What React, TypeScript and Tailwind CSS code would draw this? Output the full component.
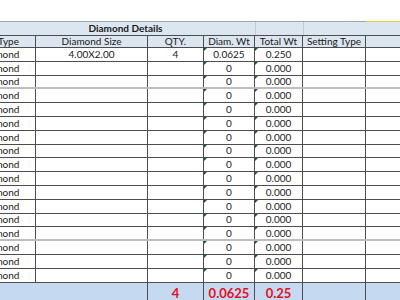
const cols = {
  type: "w-[72px]",
  size: "w-[112px]",
  qty: "w-[56px]",
  dwt: "w-[51px]",
  twt: "w-[48px]",
  set: "w-[63px]",
  last: "w-[130px]",
};

const cell = "shrink-0 flex items-center justify-center border-r border-[#4d4d4d] whitespace-nowrap";

type Row = { size: string; qty: string; dwt: string; twt: string };

const rows: Row[] = [
  { size: "4.00X2.00", qty: "4", dwt: "0.0625", twt: "0.250" },
  ...Array.from({ length: 16 }, () => ({ size: "", qty: "", dwt: "0", twt: "0.000" })),
];

// rows whose bottom line shows lighter and thicker in the sheet
const softLines = [2, 13];

function Mark() {
  return (
    <span className="absolute left-0 top-0 h-0 w-0 border-l-[3px] border-b-[3px] border-l-[#1e5a2a] border-b-transparent" />
  );
}

export default function App() {
  return (
    <div
      className="relative h-[300px] w-[400px] overflow-hidden bg-white text-[10px] text-[#1a1a1a]"
      style={{ fontFamily: "Lato, 'Liberation Sans', sans-serif" }}
    >
      <div className="ml-[-36px] w-[532px] pt-[21px]">
        {/* title row */}
        <div className="flex h-[14px] border-t border-[#9ea7b1] bg-[#dce6f1]">
          <div className="flex w-[291px] shrink-0 items-center justify-center pl-[32px] font-bold">
            Diamond Details
          </div>
          <div className={`${cols.twt} shrink-0 border-l border-[#c3ccd6]`} />
          <div className={`${cols.set} shrink-0 border-l border-[#c3ccd6]`} />
          <div className={`${cols.last} relative shrink-0`}>
            <span className="absolute left-0 right-0 top-[-1px] h-[1px] bg-[#e2d23a]" />
          </div>
        </div>

        {/* header row */}
        <div className="flex h-[13px] border-y border-[#4d4d4d] bg-[#dce6f1]">
          <div className={`${cols.type} shrink-0 flex items-center justify-end whitespace-nowrap border-r border-[#4d4d4d] pr-[16px]`}>
            Stone Type
          </div>
          <div className={`${cell} ${cols.size}`}>Diamond Size</div>
          <div className={`${cell} ${cols.qty}`}>QTY.</div>
          <div className={`${cell} ${cols.dwt}`}>Diam. Wt</div>
          <div className={`${cell} ${cols.twt}`}>Total Wt</div>
          <div className={`${cell} ${cols.set}`}>Setting Type</div>
          <div className={`${cell} ${cols.last}`}>Certificate No</div>
        </div>

        {/* data rows */}
        {rows.map((r, i) => (
          <div
            key={i}
            className={
              softLines.includes(i)
                ? "flex h-[13.8px] border-b-2 border-[#bdbdbd]"
                : "flex h-[13.8px] border-b border-[#4d4d4d]"
            }
          >
            <div className={`${cell} ${cols.type}`}>Diamond</div>
            <div className={`${cell} ${cols.size}`}>{r.size}</div>
            <div className={`${cell} ${cols.qty}`}>{r.qty}</div>
            <div className={`${cell} ${cols.dwt} relative`}>
              <Mark />
              {r.dwt}
            </div>
            <div className={`${cell} ${cols.twt} relative`}>
              <Mark />
              {r.twt}
            </div>
            <div className={`${cell} ${cols.set}`} />
            <div className={`${cell} ${cols.last}`} />
          </div>
        ))}

        {/* totals row */}
        <div className="flex h-[22px] bg-[#c5d9f1] text-[13px] font-bold text-[#e3101f]">
          <div className={`${cols.type} shrink-0`} />
          <div className={`${cell} ${cols.size}`} />
          <div className={`${cell} ${cols.qty}`}>4</div>
          <div className={`${cell} ${cols.dwt}`}>0.0625</div>
          <div className={`${cell} ${cols.twt}`}>0.25</div>
          <div className={`${cell} ${cols.set}`} />
          <div className={`${cell} ${cols.last}`} />
        </div>
      </div>
    </div>
  );
}
